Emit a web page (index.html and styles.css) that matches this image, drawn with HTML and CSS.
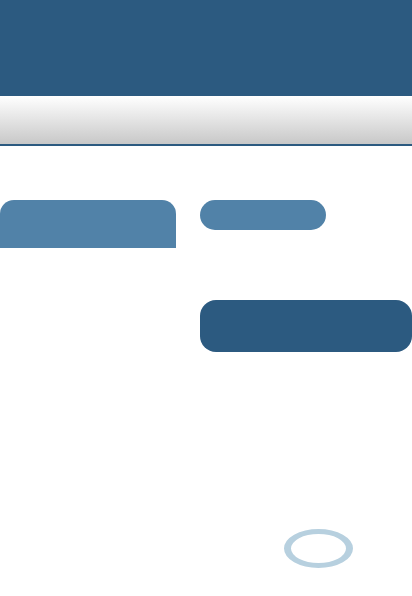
FILE: index.html
```html
<!DOCTYPE html>
<html lang="en">
<head>
    <meta charset="UTF-8">
    <meta name="viewport" content="width=device-width, initial-scale=1.0">
    <title>Page</title>
    <link rel="stylesheet" href="styles.css">
</head>
<body>
<header class="top-header"></header>
<nav class="nav-bar"></nav>

<main class="content">
    <section class="left-col">
        <div class="card-tab"></div>
    </section>
    <section class="right-col">
        <div class="pill"></div>
        <div class="dark-box"></div>
        <div class="ring"></div>
    </section>
</main>
</body>
</html>
```
FILE: styles.css
```css
body {
    font-family: "Liberation Sans", Arial, sans-serif;
    background-color: #ffffff;
    margin: 0;
    padding: 0;
}

.top-header {
    height: 96px;
    background-color: #2c5a80;
}

.nav-bar {
    height: 48px;
    background: linear-gradient(to bottom, #ffffff, #c8c8c8);
    border-bottom: 2px solid #2c5a80;
}

.content {
    display: flex;
    gap: 24px;
    padding-top: 54px;
}

.left-col {
    width: 176px;
}

.card-tab {
    height: 48px;
    background-color: #5182a8;
    border-radius: 14px 14px 0 0;
}

.right-col {
    flex: 1;
    display: flex;
    flex-direction: column;
}

.pill {
    width: 126px;
    height: 30px;
    background-color: #5182a8;
    border-radius: 15px;
    margin-bottom: 70px;
}

.dark-box {
    height: 52px;
    background-color: #2c5a80;
    border-radius: 16px;
}

.ring {
    width: 55px;
    height: 29px;
    border-style: solid;
    border-color: #b7d0df;
    border-width: 5px 7px;
    border-radius: 50%;
    margin: 177px 0 0 84px;
}
```
